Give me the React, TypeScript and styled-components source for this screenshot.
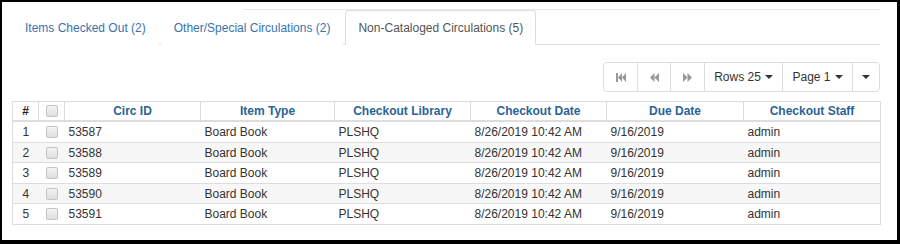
import React from 'react';
import styled, { createGlobalStyle } from 'styled-components';

const GlobalStyle = createGlobalStyle`
  html, body {
    margin: 0;
    padding: 0;
    background: #ffffff;
  }
  * {
    box-sizing: border-box;
  }
`;

interface Circulation {
    id: string;
    itemType: string;
    library: string;
    checkoutDate: string;
    dueDate: string;
    staff: string;
}

const rows: Circulation[] = ['53587', '53588', '53589', '53590', '53591'].map(id => ({
    id,
    itemType: 'Board Book',
    library: 'PLSHQ',
    checkoutDate: '8/26/2019 10:42 AM',
    dueDate: '9/16/2019',
    staff: 'admin'
}));

const tabs = [
    { label: 'Items Checked Out (2)', active: false },
    { label: 'Other/Special Circulations (2)', active: false },
    { label: 'Non-Cataloged Circulations (5)', active: true }
];

const columns = [
    { title: '#', width: 26 },
    { title: '', width: 26 },
    { title: 'Circ ID', width: 136 },
    { title: 'Item Type', width: 134 },
    { title: 'Checkout Library', width: 136 },
    { title: 'Checkout Date', width: 136 },
    { title: 'Due Date', width: 137 },
    { title: 'Checkout Staff', width: 137 }
];

const Frame = styled.div`
  width: 900px;
  height: 244px;
  border-style: solid;
  border-color: #000;
  border-width: 2px 3px 4px 2px;
  padding: 7px 17px 0 10px;
  background: #fff;
  font-family: "Liberation Sans", Arial, sans-serif;
  font-size: 12px;
  color: #333;
  overflow: hidden;
`;

const TopRule = styled.div`
  height: 1px;
  margin-left: 231px;
  background: #e8e8e8;
`;

const TabList = styled.ul`
  display: flex;
  margin: 0;
  padding: 0;
  list-style-type: none;
  border-bottom: 1px solid #ddd;
`;

const Tab = styled.li<{ active: boolean }>`
  margin: 0 2px -1px 0;
  padding: 9px 12px 8px;
  line-height: 16px;
  border: 1px solid ${props => props.active ? '#ddd' : 'transparent'};
  border-bottom-color: ${props => props.active ? '#fff' : 'transparent'};
  border-radius: 4px 4px 0 0;
  background: #fff;
  color: ${props => props.active ? '#555' : '#3a72ad'};
  white-space: nowrap;
`;

const Toolbar = styled.div`
  display: flex;
  justify-content: flex-end;
  margin: 17px 0 9px;
`;

const ButtonGroup = styled.div`
  display: flex;
  height: 30px;
  border: 1px solid #ddd;
  border-radius: 4px;
`;

const GroupButton = styled.div<{ width: number }>`
  display: flex;
  align-items: center;
  justify-content: center;
  width: ${props => props.width}px;
  color: #333;
  font-size: 12px;
  & + & {
    border-left: 1px solid #ddd;
  }
`;

const Caret = styled.span`
  display: inline-block;
  width: 0;
  height: 0;
  margin-left: 4px;
  border-top: 4px solid #333;
  border-left: 4px solid transparent;
  border-right: 4px solid transparent;
`;

const Table = styled.table`
  width: 868px;
  table-layout: fixed;
  border-collapse: collapse;
  border: 1px solid #ddd;
`;

const HeadCell = styled.th<{ dark?: boolean }>`
  padding: 1px 4px;
  line-height: 16px;
  border: 1px solid #ddd;
  border-bottom: 2px solid #ddd;
  color: ${props => props.dark ? '#222' : '#2a6496'};
  font-weight: bold;
  text-align: center;
  white-space: nowrap;
`;

const Row = styled.tr<{ striped: boolean }>`
  background: ${props => props.striped ? '#f7f7f7' : '#fff'};
  border-top: 1px solid #ddd;
`;

const Cell = styled.td<{ center?: boolean }>`
  padding: 2px 4px 1.5px;
  line-height: 16px;
  text-align: ${props => props.center ? 'center' : 'left'};
  white-space: nowrap;
`;

const CheckBox = styled.span`
  display: inline-block;
  width: 12px;
  height: 12px;
  vertical-align: -2px;
  border: 1px solid #c4c4c4;
  border-radius: 2px;
  background: linear-gradient(#f4f4f4, #dedede);
`;

const StepBackIcon = () => (
    <svg width="10" height="9" viewBox="0 0 10 9">
        <rect x="0" y="0" width="2" height="9" fill="#999" />
        <polygon points="6,0 6,9 2,4.5" fill="#999" />
        <polygon points="10,0 10,9 6,4.5" fill="#999" />
    </svg>
);

const BackIcon = () => (
    <svg width="9" height="9" viewBox="0 0 9 9">
        <polygon points="4.5,0 4.5,9 0,4.5" fill="#999" />
        <polygon points="9,0 9,9 4.5,4.5" fill="#999" />
    </svg>
);

const ForwardIcon = () => (
    <svg width="9" height="9" viewBox="0 0 9 9">
        <polygon points="0,0 0,9 4.5,4.5" fill="#999" />
        <polygon points="4.5,0 4.5,9 9,4.5" fill="#999" />
    </svg>
);

export default function App() {
    return (
        <Frame>
            <GlobalStyle />
            <TopRule />
            <TabList>
                {tabs.map(tab => (
                    <Tab key={tab.label} active={tab.active}>{tab.label}</Tab>
                ))}
            </TabList>

            <Toolbar>
                <ButtonGroup>
                    <GroupButton width={33}><StepBackIcon /></GroupButton>
                    <GroupButton width={33}><BackIcon /></GroupButton>
                    <GroupButton width={34}><ForwardIcon /></GroupButton>
                    <GroupButton width={78}>Rows 25<Caret /></GroupButton>
                    <GroupButton width={70}>Page 1<Caret /></GroupButton>
                    <GroupButton width={27}><Caret style={{ marginLeft: 0 }} /></GroupButton>
                </ButtonGroup>
            </Toolbar>

            <Table>
                <colgroup>
                    {columns.map((col, i) => <col key={i} style={{ width: col.width }} />)}
                </colgroup>
                <thead>
                    <tr>
                        {columns.map((col, i) => (
                            <HeadCell key={i} dark={i === 0}>
                                {i === 1 ? <CheckBox /> : col.title}
                            </HeadCell>
                        ))}
                    </tr>
                </thead>
                <tbody>
                    {rows.map((row, i) => (
                        <Row key={row.id} striped={i % 2 === 1}>
                            <Cell center>{i + 1}</Cell>
                            <Cell center><CheckBox /></Cell>
                            <Cell>{row.id}</Cell>
                            <Cell>{row.itemType}</Cell>
                            <Cell>{row.library}</Cell>
                            <Cell>{row.checkoutDate}</Cell>
                            <Cell>{row.dueDate}</Cell>
                            <Cell>{row.staff}</Cell>
                        </Row>
                    ))}
                </tbody>
            </Table>
        </Frame>
    );
}
